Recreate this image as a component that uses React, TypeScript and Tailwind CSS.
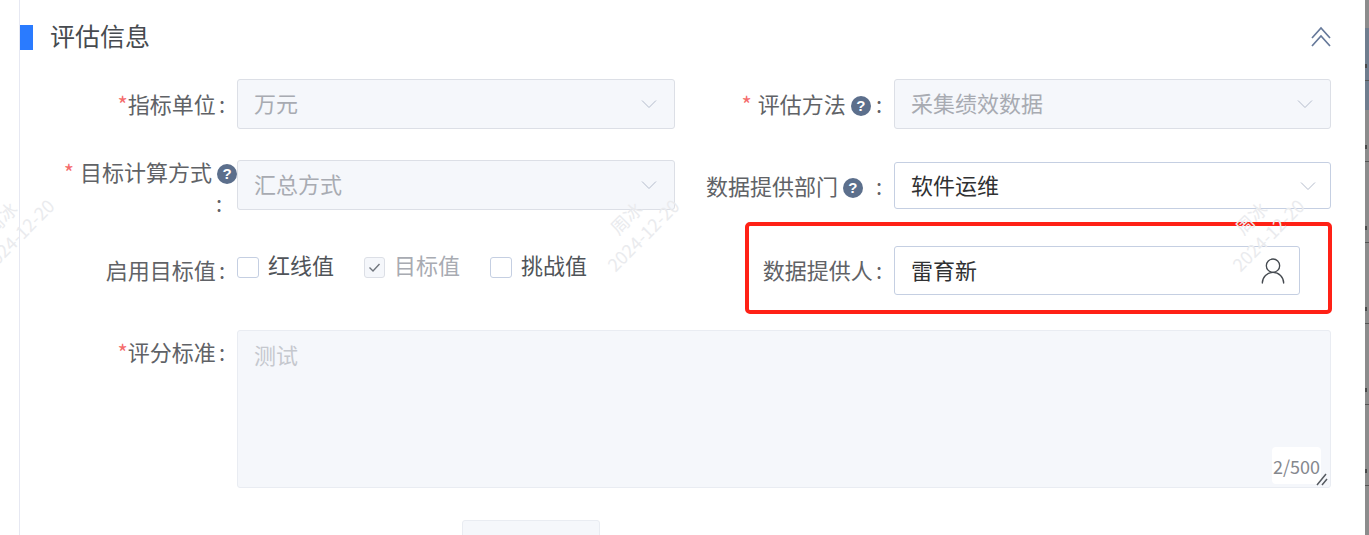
import * as React from 'react';
import { UserRound } from 'lucide-react';

const font = "font-['Noto_Sans_CJK_SC','Liberation_Sans',sans-serif]";

function Star({ gap }: { gap?: boolean }) {
  return <span className={gap ? 'mr-1.5 text-[#f56c6c]' : 'text-[#f56c6c]'}>*</span>;
}

function Colon() {
  return <span className="ml-[3px]">:</span>;
}

function Help() {
  return (
    <span className="mx-[5px] inline-flex h-[20px] w-[20px] items-center justify-center rounded-full bg-[#5c6f8c] align-[2px] font-['Liberation_Sans',sans-serif] text-[15px] font-bold leading-none text-white">
      ?
    </span>
  );
}

function Chevron() {
  return (
    <svg className="h-[10px] w-[16px] text-[#b4bccc]" viewBox="0 0 16 10" fill="none" stroke="currentColor" strokeWidth="1">
      <path d="M1 1.5 8 8.5 15 1.5" />
    </svg>
  );
}

function Select({ value, disabled }: { value: string; disabled?: boolean }) {
  return (
    <div
      className={
        disabled
          ? 'flex h-[50px] flex-1 items-center justify-between rounded-[3px] border border-[#dcdfe6] bg-[#f5f7fb] pl-4 pr-[17px] text-[#a8abb2]'
          : 'flex h-[47px] flex-1 items-center justify-between rounded-[3px] border border-[#c5cfe2] bg-white pl-4 pr-[14px] text-[#303133]'
      }
    >
      <span className="-mt-[3px]">{value}</span>
      <Chevron />
    </div>
  );
}

function Checkbox({ label, checked }: { label: string; checked?: boolean }) {
  return (
    <div className="mr-[31px] flex items-start">
      <span
        className={
          checked
            ? 'mt-[3px] flex h-[21px] w-[21px] items-center justify-center rounded-[3px] border border-[#dcdfe6] bg-[#f5f7fb]'
            : 'mt-[3px] h-[21px] w-[22px] rounded-[3px] border border-[#c5cfe2] bg-white'
        }
      >
        {checked && (
          <svg className="h-[13px] w-[13px] text-[#70757d]" viewBox="0 0 13 13" fill="none" stroke="currentColor" strokeWidth="1.4">
            <path d="M1.5 6.5 5 10 11.5 3" />
          </svg>
        )}
      </span>
      <span className={checked ? 'ml-[9px] -mr-[1px] -mt-[4px] leading-[28px] text-[#a8abb2]' : 'ml-[9px] -mr-[1px] -mt-[4px] leading-[28px] text-[#505459]'}>{label}</span>
    </div>
  );
}

function Watermark({ className }: { className: string }) {
  return (
    <div className={`pointer-events-none absolute w-[110px] -rotate-45 text-center text-[18px] leading-[24px] text-[#eaebee] ${className}`}>
      <div>周冰</div>
      <div>2024-12-20</div>
    </div>
  );
}

export default function App() {
  return (
    <div className={`relative h-[535px] w-[1369px] overflow-hidden bg-white pl-[19px] pr-1 text-[22px] text-[#606266] ${font}`}>
      <div className="h-full border-l border-[#e6e8f2] pr-[34px]">
        <div className="flex h-[74px] items-center justify-between">
          <div className="flex items-center">
            <span className="h-[25px] w-[13px] bg-[#2a7bff]" />
            <span className="ml-[17px] -mt-[2px] text-[25px] text-[#474b50]">评估信息</span>
          </div>
          <svg className="h-[22px] w-[20px] text-[#66799a]" viewBox="0 0 20 22" fill="none" stroke="currentColor" strokeWidth="1.7">
            <path d="M1 12 10 2l9 10M1 20 10 10l9 10" />
          </svg>
        </div>

        <div className="mt-[5px] flex h-[50px]">
          <div className="flex w-[655px]">
            <div className="w-[205px] pt-[8px] text-right leading-[32px]">
              <Star />指标单位<Colon />
            </div>
            <div className="ml-[12px] flex flex-1"><Select value="万元" disabled /></div>
          </div>
          <div className="flex flex-1">
            <div className="w-[207px] pt-[8px] text-right leading-[32px]">
              <Star gap />评估方法<Help />:
            </div>
            <div className="ml-[12px] flex flex-1"><Select value="采集绩效数据" disabled /></div>
          </div>
        </div>

        <div className="mt-[31px] flex h-[50px]">
          <div className="flex w-[655px]">
            <div className="w-[205px] text-right leading-[32px]">
              <div className="-mr-[17px] -mt-[5px] whitespace-nowrap"><Star gap />目标计算方式<Help /></div>
              <div className="-mt-[1px] pr-[3px] leading-[32px]">:</div>
            </div>
            <div className="ml-[12px] flex flex-1"><Select value="汇总方式" disabled /></div>
          </div>
          <div className="flex flex-1 items-start">
            <div className="w-[207px] whitespace-nowrap pt-[9px] text-right leading-[32px]">
              数据提供部门<Help />&nbsp;<Colon />
            </div>
            <div className="ml-[12px] mt-[2px] flex flex-1"><Select value="软件运维" /></div>
          </div>
        </div>

        <div className="mt-[36px] flex h-[49px]">
          <div className="flex w-[655px]">
            <div className="w-[205px] pt-[7px] text-right leading-[32px]">启用目标值<Colon /></div>
            <div className="ml-[12px] mt-[8px] flex">
              <Checkbox label="红线值" />
              <Checkbox label="目标值" checked />
              <Checkbox label="挑战值" />
            </div>
          </div>
          <div className="flex flex-1">
            <div className="w-[207px] pt-[7px] text-right leading-[32px]">数据提供人<Colon /></div>
            <div className="ml-[12px] flex h-[49px] w-[406px] items-center justify-between rounded-[3px] border border-[#c5cfe2] bg-white pl-4 pr-[10px] text-[#303133]">
              <span className="-mt-[2px]">雷育新</span>
              <UserRound size={32} strokeWidth={1} className="text-[#454a50]" />
            </div>
          </div>
        </div>

        <div className="mt-[35px] flex h-[158px]">
          <div className="w-[205px] pt-[5px] text-right leading-[32px]">
            <Star />评分标准<Colon />
          </div>
          <div className="relative ml-[12px] flex-1 rounded-[3px] border border-[#e9ecf2] bg-[#f5f7fb] px-4 pt-[7px] leading-[32px] text-[#c5c8ce]">
            测试
            <span className="absolute bottom-[3px] right-[9px] flex h-[37px] w-[49px] items-center justify-center rounded-[4px] bg-white text-[18px] text-[#85888e]">2/500</span>
            <svg className="absolute bottom-[1px] right-[2px] h-[14px] w-[12px]" viewBox="0 0 12 14" stroke="#555a60" strokeWidth="1.5" fill="none">
              <path d="M1 13 10 2M6 13 11 7" />
            </svg>
          </div>
        </div>

        <div className="ml-[442px] mt-8 h-[20px] w-[138px] rounded-t-[3px] border border-[#e9ecf2] bg-[#f5f7fb]" />
      </div>

      <div className="absolute right-0 top-0 flex h-full w-1 flex-col bg-[#8c8c8c] pt-[64px]">
        <div className="absolute left-0 top-[28px] h-[82px] w-full bg-[#6f7d8e]" />
        {[0, 1, 2, 3, 4, 5].map((i) => (
          <div key={i} className="relative h-[81px] shrink-0">
            <div className="h-[4px] w-[2px] bg-[#4a4a4a]" />
            <div className="mt-[12px] h-[1px] w-full bg-[#555555]" />
          </div>
        ))}
      </div>
      <div className="pointer-events-none absolute left-[745px] top-[222px] h-[92px] w-[587px] rounded-[5px] border-4 border-[#ff2116]" />
      <Watermark className="left-[-46px] top-[202px]" />
      <Watermark className="left-[579px] top-[202px]" />
      <Watermark className="left-[1204px] top-[202px]" />
    </div>
  );
}
